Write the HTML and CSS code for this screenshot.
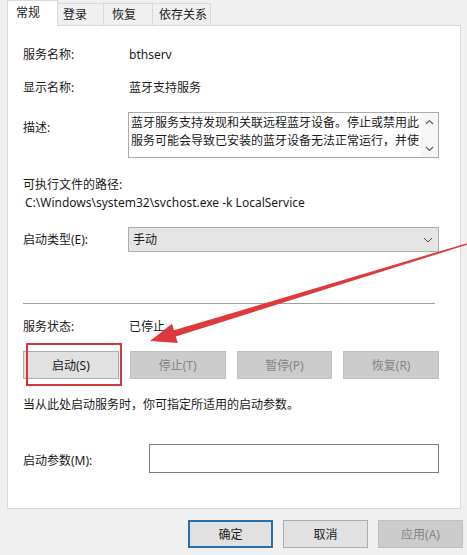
FILE: index.html
```html
<!DOCTYPE html>
<html lang="zh-CN">
<head>
    <meta charset="UTF-8">
    <title>蓝牙支持服务 的属性</title>
    <link rel="stylesheet" href="styles.css">
</head>
<body>
<div class="dialog">
    <div class="tabs">
        <div class="tab active">常规</div>
        <div class="tab t-login">登录</div>
        <div class="tab t-recover">恢复</div>
        <div class="tab t-deps">依存关系</div>
    </div>

    <div class="panel">
        <div class="row r-name">
            <span class="label">服务名称:</span>
            <span>bthserv</span>
        </div>
        <div class="row r-display">
            <span class="label">显示名称:</span>
            <span>蓝牙支持服务</span>
        </div>
        <div class="row r-desc">
            <span class="label desc-label">描述:</span>
            <div class="desc-box">
                <div class="desc-text">蓝牙服务支持发现和关联远程蓝牙设备。停止或禁用此服务可能会导致已安装的蓝牙设备无法正常运行，并使</div>
                <div class="scroll">
                    <svg width="9" height="6" viewBox="0 0 9 6"><path d="M1 5 L4.5 1.5 L8 5" fill="none" stroke="#606060" stroke-width="1.2"/></svg>
                    <svg width="9" height="6" viewBox="0 0 9 6"><path d="M1 1 L4.5 4.5 L8 1" fill="none" stroke="#606060" stroke-width="1.2"/></svg>
                </div>
            </div>
        </div>
        <div class="line r-path-label">可执行文件的路径:</div>
        <div class="line r-path">C:\Windows\system32\svchost.exe -k LocalService</div>
        <div class="row r-type">
            <span class="label">启动类型(E):</span>
            <div class="select">
                <span>手动</span>
                <svg width="10" height="6" viewBox="0 0 10 6"><path d="M1 1 L5 5 L9 1" fill="none" stroke="#505050" stroke-width="1"/></svg>
            </div>
        </div>

        <div class="sep"></div>

        <div class="row r-status">
            <span class="label">服务状态:</span>
            <span>已停止</span>
        </div>
        <div class="actions">
            <button class="btn marked">启动(S)</button>
            <button class="btn" disabled>停止(T)</button>
            <button class="btn" disabled>暂停(P)</button>
            <button class="btn" disabled>恢复(R)</button>
        </div>
        <div class="line r-hint">当从此处启动服务时，你可指定所适用的启动参数。</div>
        <div class="row r-params">
            <span class="label">启动参数(M):</span>
            <div class="input"></div>
        </div>
    </div>

    <div class="footer">
        <button class="btn default">确定</button>
        <button class="btn">取消</button>
        <button class="btn" disabled>应用(A)</button>
    </div>

    <svg class="arrow" width="467" height="555" viewBox="0 0 467 555">
        <polygon fill="#de3a3d" points="150,341 177.8,343 175.8,336.5 470,243.8 469.6,242.4 173.9,330.3 172,323.8"/>
    </svg>
</div>
</body>
</html>
```
FILE: styles.css
```css
html,body{
    margin: 0;
    padding: 0;
}
body{
    background: #f0f0f0;
    font: 12px "Noto Sans", "Noto Sans CJK SC", sans-serif;
    color: #1a1a1a;
}
.dialog{
    position: relative;
    width: 467px;
    height: 555px;
    overflow: hidden;
}

/* tabs */
.tabs{
    display: flex;
    align-items: flex-end;
    height: 25px;
    padding-left: 7px;
}
.tab{
    box-sizing: border-box;
    height: 22px;
    line-height: 21px;
    padding-left: 7px;
    border: 1px solid #d9d9d9;
    border-bottom: none;
    border-left: none;
    background: #f0f0f0;
}
.tab.active{
    position: relative;
    z-index: 1;
    width: 51px;
    height: 26px;
    margin-bottom: -1px;
    padding-left: 8px;
    line-height: 24px;
    background: #fff;
    border-left: 1px solid #d9d9d9;
}
.t-login{
    width: 46px;
    padding-left: 5px;
}
.t-recover{
    width: 49px;
    padding-left: 8px;
}
.t-deps{
    width: 58px;
    padding-left: 6px;
}

/* panel */
.panel{
    box-sizing: border-box;
    width: 454px;
    height: 484px;
    margin-left: 7px;
    padding: 0 21px 0 15px;
    background: #fff;
    border: 1px solid #d9d9d9;
}
.row{
    display: flex;
    align-items: center;
}
.label{
    flex: none;
    width: 106px;
}
.line,.row{
    line-height: 16px;
}
.r-name{
    margin-top: 21px;
}
.r-display{
    margin-top: 17px;
}
.r-desc{
    margin-top: 16px;
    align-items: flex-start;
}
.desc-label{
    width: 105px;
    padding-top: 8px;
}
.desc-box{
    flex: 1;
    display: flex;
    height: 46px;
    box-sizing: border-box;
    border: 1px solid #ababab;
}
.desc-text{
    flex: 1;
    padding: 1px 0 0 2px;
    line-height: 18px;
    overflow: hidden;
}
.scroll{
    flex: none;
    width: 17px;
    display: flex;
    flex-direction: column;
    justify-content: space-between;
    align-items: center;
    padding: 6px 0 5px;
    box-sizing: border-box;
    background: #f6f6f6;
}
.r-path-label{
    margin-top: 19px;
}
.r-path{
    margin-top: 2px;
    padding-left: 2px;
}
.r-type{
    margin-top: 16px;
}
.r-type .label{
    width: 105px;
}
.select{
    flex: 1;
    display: flex;
    align-items: center;
    justify-content: space-between;
    height: 25px;
    box-sizing: border-box;
    padding: 0 5px 0 4px;
    background: #e5e5e5;
    border: 1px solid #adadad;
}
.sep{
    height: 1px;
    margin: 51px 4px 0 0;
    background: #a0a0a0;
}
.r-status{
    margin-top: 15px;
}
.actions{
    display: grid;
    grid-template-columns: repeat(4, 1fr);
    column-gap: 11px;
    margin-top: 16px;
}
.btn{
    box-sizing: border-box;
    height: 28px;
    padding: 0;
    font: inherit;
    color: #1a1a1a;
    background: #e1e1e1;
    border: 1px solid #adadad;
}
.btn:disabled{
    color: #848484;
    background: #cccccc;
    border-color: #bfbfbf;
}
.marked{
    position: relative;
}
.marked::after{
    content: "";
    position: absolute;
    left: 2px;
    top: -9px;
    right: -4px;
    bottom: -8px;
    border: 2px solid #d4383d;
}
.r-hint{
    margin-top: 18px;
}
.r-params{
    margin-top: 31px;
}
.r-params .label{
    width: 126px;
    padding-top: 4px;
}
.input{
    flex: 1;
    height: 29px;
    box-sizing: border-box;
    border: 1px solid #7a7a7a;
    background: #fff;
}

/* footer */
.footer{
    display: flex;
    justify-content: flex-end;
    gap: 10px;
    padding: 11px 4px 0 0;
}
.footer .btn{
    width: 85px;
}
.footer .default{
    border: 2px solid #2a6fa8;
}

.arrow{
    position: absolute;
    left: 0;
    top: 0;
    pointer-events: none;
}
```
